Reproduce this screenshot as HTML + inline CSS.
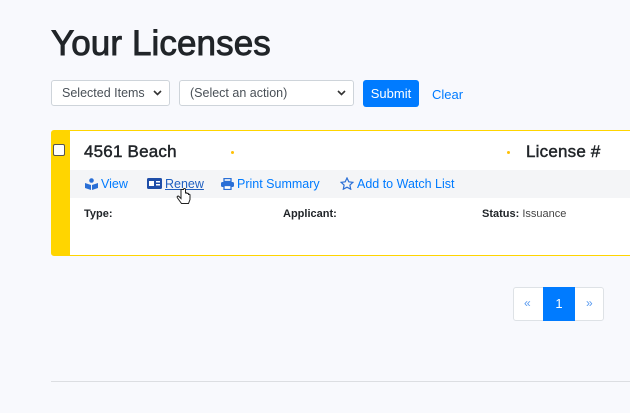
<!DOCTYPE html>
<html><head><style>
body{margin:0;width:630px;height:413px;overflow:hidden;background:#f8f9fd;font-family:"Liberation Sans",sans-serif;position:relative;color:#212529}
.abs{position:absolute}
h1{position:absolute;left:51px;top:24px;margin:0;font-size:35px;font-weight:normal;-webkit-text-stroke:0.9px #212529;color:#212529;letter-spacing:0.1px}
.sel{position:absolute;top:80px;height:26px;border:1px solid #ced4da;border-radius:3px;background:#fff;font-size:12.5px;color:#495057;box-sizing:border-box;line-height:24px;padding-left:10px}
.sel svg{position:absolute;right:7px;top:9px}
.btn{position:absolute;left:363px;top:80px;width:56px;height:27px;background:#007bff;border-radius:3px;color:#fff;font-size:13px;text-align:center;line-height:27px}
.card{position:absolute;left:51px;top:130px;width:600px;height:126px;border:1px solid #ffd500;border-radius:3px;background:#fff;box-sizing:border-box}
.bar{position:absolute;left:0;top:0;width:18px;height:100%;background:#ffd500}
.act{position:absolute;left:70px;top:170px;width:580px;height:28px;background:#f4f5f7}
.lnk{position:absolute;top:177px;font-size:12.5px;color:#007bff}
.lbl{position:absolute;top:208px;font-size:11px;font-weight:bold;color:#212529}
.tt{-webkit-text-stroke:0.45px #212529}
</style></head><body>
<h1>Your Licenses</h1>
<div class="sel" style="left:51px;width:119px">Selected Items<svg width="9" height="6"><path d="M1 1l3.5 3.5L8 1" stroke="#333" stroke-width="1.6" fill="none"/></svg></div>
<div class="sel" style="left:179px;width:175px">(Select an action)<svg width="9" height="6"><path d="M1 1l3.5 3.5L8 1" stroke="#333" stroke-width="1.6" fill="none"/></svg></div>
<div class="btn">Submit</div>
<div class="abs" style="left:432px;top:87px;font-size:13px;color:#007bff">Clear</div>

<div class="card"><div class="bar"></div></div>
<div class="abs" style="left:53px;top:144px;width:12px;height:12px;border:1px solid #555;border-radius:2px;background:#fff;box-sizing:border-box"></div>
<div class="abs tt" style="left:84px;top:142px;font-size:17px;letter-spacing:0.2px">4561 Beach</div>
<div class="abs" style="left:231px;top:151px;width:3px;height:3px;background:#ffc107;border-radius:50%"></div>
<div class="abs" style="left:507px;top:151px;width:3px;height:3px;background:#ffc107;border-radius:50%"></div>
<div class="abs tt" style="left:526px;top:142px;font-size:17px;letter-spacing:0.2px">License #</div>
<div class="act"></div>
<svg class="abs" style="left:85px;top:178px" width="13" height="12"><circle cx="6.5" cy="2.5" r="2.3" fill="#2a6fd6"/><path d="M0 5l6 2v5L0 10zM13 5l-6 2v5l6-2z" fill="#2a6fd6"/></svg>
<div class="lnk" style="left:101px">View</div>
<svg class="abs" style="left:147px;top:178px" width="15" height="11"><rect width="15" height="11" rx="1.5" fill="#1f4ea8"/><rect x="2" y="3" width="5" height="5" fill="#fff"/><rect x="9" y="3" width="4" height="1.5" fill="#fff"/><rect x="9" y="6" width="4" height="1.5" fill="#fff"/></svg>
<div class="lnk" style="left:165px;text-decoration:underline;color:#1f5fc0">Renew</div>
<svg class="abs" style="left:176px;top:188px" width="16" height="20"><path d="M5 1.5v9l-2-2c-1-1-2.5 0-1.5 1.5l4 5.5h7l1.5-4v-4.5c0-1-1.5-1-1.5 0v-1c0-1-1.5-1-1.5 0v-.5c0-1-1.5-1-1.5 0V1.5c0-1.3-2-1.3-2 0z" fill="#fff" stroke="#222" stroke-width="1"/></svg>
<svg class="abs" style="left:221px;top:178px" width="13" height="12"><rect x="3" y="0.5" width="7" height="3" fill="none" stroke="#2a6fd6" stroke-width="1.3"/><rect x="0" y="4" width="13" height="5" rx="1.5" fill="#2a6fd6"/><rect x="3" y="7.5" width="7" height="4" fill="#fff" stroke="#2a6fd6" stroke-width="1.3"/></svg>
<div class="lnk" style="left:237px">Print Summary</div>
<svg class="abs" style="left:340px;top:177px" width="14" height="13"><path d="M7 1l1.8 3.8 4.1.5-3 2.8.8 4.1L7 10.2l-3.7 2 .8-4.1-3-2.8 4.1-.5z" fill="none" stroke="#2a6fd6" stroke-width="1.2"/></svg>
<div class="lnk" style="left:357px">Add to Watch List</div>
<div class="lbl" style="left:84px">Type:</div>
<div class="lbl" style="left:283px">Applicant:</div>
<div class="lbl" style="left:482px">Status: <span style="font-weight:normal;color:#444">Issuance</span></div>

<div class="abs" style="left:513px;top:287px;width:91px;height:34px;border:1px solid #dee2e6;border-radius:3px;background:#fff;box-sizing:border-box"></div>
<div class="abs" style="left:543px;top:287px;width:32px;height:34px;background:#007bff;color:#fff;font-size:13px;text-align:center;line-height:34px">1</div>
<div class="abs" style="left:524px;top:296px;font-size:12px;color:#5a9bf0">«</div>
<div class="abs" style="left:586px;top:296px;font-size:12px;color:#5a9bf0">»</div>
<div class="abs" style="left:51px;top:381px;width:579px;height:1px;background:#dcdee2"></div>
</body></html>
